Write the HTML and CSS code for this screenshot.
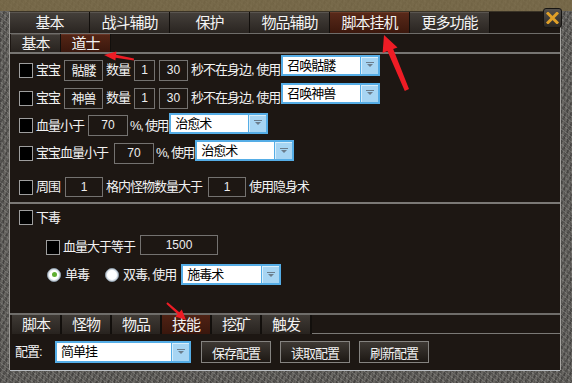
FILE: index.html
```html
<!DOCTYPE html>
<html lang="zh-CN">
<head>
  <meta charset="UTF-8">
  <title>脚本挂机</title>
  <link rel="stylesheet" href="styles.css">
</head>
<body>
  <div class="window">
    <div class="inner">
      <!-- main tabs -->
      <div class="main-tabs">
        <div class="tab">基本</div>
        <div class="tab">战斗辅助</div>
        <div class="tab">保护</div>
        <div class="tab">物品辅助</div>
        <div class="tab active">脚本挂机</div>
        <div class="tab">更多功能</div>
      </div>

      <!-- sub tabs -->
      <div class="sub-tabs">
        <div class="tab">基本</div>
        <div class="tab active">道士</div>
      </div>

      <!-- panel -->
      <div class="panel">
        <div class="row r1">
          <span class="check"></span>
          <span class="lbl">宝宝</span>
          <span class="box pet">骷髅</span>
          <span class="lbl l-num">数量</span>
          <span class="box n1">1</span>
          <span class="box n2">30</span>
          <span class="lbl l-away">秒不在身边, 使用</span>
          <div class="select s-pet"><span class="val">召唤骷髅</span><span class="drop"><svg width="8" height="6" viewBox="0 0 8 6"><rect x="0" y="0" width="8" height="1" fill="#6b7d8c"/><path d="M1 2h6l-3 3z" fill="#6b7d8c"/></svg></span></div>
        </div>

        <div class="row r2">
          <span class="check"></span>
          <span class="lbl">宝宝</span>
          <span class="box pet">神兽</span>
          <span class="lbl l-num">数量</span>
          <span class="box n1">1</span>
          <span class="box n2">30</span>
          <span class="lbl l-away">秒不在身边, 使用</span>
          <div class="select s-pet"><span class="val">召唤神兽</span><span class="drop"><svg width="8" height="6" viewBox="0 0 8 6"><rect x="0" y="0" width="8" height="1" fill="#6b7d8c"/><path d="M1 2h6l-3 3z" fill="#6b7d8c"/></svg></span></div>
        </div>

        <div class="row r3">
          <span class="check"></span>
          <span class="lbl">血量小于</span>
          <span class="box hp">70</span>
          <span class="lbl l-use">%, 使用</span>
          <div class="select s-heal"><span class="val">治愈术</span><span class="drop"><svg width="8" height="6" viewBox="0 0 8 6"><rect x="0" y="0" width="8" height="1" fill="#6b7d8c"/><path d="M1 2h6l-3 3z" fill="#6b7d8c"/></svg></span></div>
        </div>

        <div class="row r4">
          <span class="check"></span>
          <span class="lbl">宝宝血量小于</span>
          <span class="box hp pet-hp">70</span>
          <span class="lbl l-use">%, 使用</span>
          <div class="select s-heal"><span class="val">治愈术</span><span class="drop"><svg width="8" height="6" viewBox="0 0 8 6"><rect x="0" y="0" width="8" height="1" fill="#6b7d8c"/><path d="M1 2h6l-3 3z" fill="#6b7d8c"/></svg></span></div>
        </div>

        <div class="row r5">
          <span class="check"></span>
          <span class="lbl">周围</span>
          <span class="box grid">1</span>
          <span class="lbl l-grid">格内怪物数量大于</span>
          <span class="box count">1</span>
          <span class="lbl l-hide">使用隐身术</span>
        </div>

        <div class="divider"></div>

        <div class="row r6">
          <span class="check"></span>
          <span class="lbl">下毒</span>
        </div>

        <div class="row r7">
          <span class="check"></span>
          <span class="lbl">血量大于等于</span>
          <span class="box poison-hp">1500</span>
        </div>

        <div class="row r8">
          <span class="radio on"></span>
          <span class="lbl">单毒</span>
          <span class="radio r-double"></span>
          <span class="lbl">双毒, 使用</span>
          <div class="select s-poison"><span class="val">施毒术</span><span class="drop"><svg width="8" height="6" viewBox="0 0 8 6"><rect x="0" y="0" width="8" height="1" fill="#6b7d8c"/><path d="M1 2h6l-3 3z" fill="#6b7d8c"/></svg></span></div>
        </div>
      </div>

      <!-- bottom tabs -->
      <div class="bottom-tabs">
        <div class="tab">脚本</div>
        <div class="tab">怪物</div>
        <div class="tab">物品</div>
        <div class="tab active">技能</div>
        <div class="tab">挖矿</div>
        <div class="tab">触发</div>
        <div class="fill"></div>
      </div>

      <!-- config -->
      <div class="config">
        <span class="lbl">配置:</span>
        <div class="select s-config"><span class="val">简单挂</span><span class="drop"><svg width="8" height="6" viewBox="0 0 8 6"><rect x="0" y="0" width="8" height="1" fill="#6b7d8c"/><path d="M1 2h6l-3 3z" fill="#6b7d8c"/></svg></span></div>
        <button class="btn first">保存配置</button>
        <button class="btn">读取配置</button>
        <button class="btn">刷新配置</button>
      </div>
    </div>

    <button class="close">
      <svg width="13" height="12" viewBox="0 0 13 12">
        <path d="M2 1.5l9 9M11 1.5l-9 9" stroke="#e0a028" stroke-width="3" stroke-linecap="square"/>
      </svg>
    </button>

    <!-- red annotation arrows -->
    <svg class="marks" width="572" height="383" viewBox="0 0 572 383">
      <polygon fill="#ee1c25" points="104,55 116.4,51.5 116.1,54.8 134,58.6 133.8,60.4 115.7,57.8 115.4,60.5"/>
      <polygon fill="#ee1c25" points="384,35 397.5,47.4 393.2,49 409,89 404.8,91 387.4,51 382.6,53"/>
      <polygon fill="#ee1c25" points="186,320 175.3,316.6 177.6,314.3 166.3,303.7 167.6,302.3 179.3,312.3 181.8,309.6"/>
    </svg>
  </div>
</body>
</html>
```

FILE: styles.css
```css
/* Global */
body {
  margin: 0;
  padding: 0;
  background: #1d1713;
  font-family: "Liberation Sans", "Noto Sans CJK SC", sans-serif;
  font-size: 12px;
  color: #f2f2f2;
}

/* Stone frame */
.window {
  position: relative;
  width: 572px;
  height: 383px;
  box-sizing: border-box;
  padding: 12px 12px 13px 10px;
  background-color: #676561;
  background-image:
    linear-gradient(to bottom, rgba(122, 106, 70, 0.85) 0 11px, transparent 11px),
    repeating-linear-gradient(37deg, rgba(255, 255, 255, 0.12) 0 1px, transparent 1px 4px),
    repeating-linear-gradient(-61deg, rgba(0, 0, 0, 0.22) 0 2px, transparent 2px 5px),
    repeating-linear-gradient(90deg, rgba(0, 0, 0, 0.15) 0 1px, transparent 1px 3px);
  overflow: hidden;
}

.inner {
  width: 550px;
  height: 358px;
  background: #1d1713;
  display: flex;
  flex-direction: column;
  box-shadow: -1px 0 0 #9c9a96, 1px 0 0 #a8a6a2, 0 -1px 0 #3a3326, 0 1px 0 #b8bcc0;
}

/* Tabs */
.main-tabs {
  display: flex;
  height: 21px;
  border-bottom: 1px solid #6f6d6a;
  background: #1d1713;
}

.main-tabs .tab {
  width: 79px;
  border-right: 1px solid #120f0c;
  background: linear-gradient(to bottom, #45403b, #2a2521);
  box-shadow: inset 0 1px 0 #5a5550;
  text-align: center;
  font-size: 15px;
  letter-spacing: -1px;
  line-height: 21px;
  color: #f4f4f4;
}

.main-tabs .tab.active {
  background: linear-gradient(to bottom, #5a2a1a, #3c180d);
  box-shadow: inset 0 1px 0 #6a3a28;
}

.sub-tabs {
  display: flex;
  height: 18px;
  padding-left: 1px;
  border-bottom: 2px solid #777572;
}

.sub-tabs .tab {
  width: 49px;
  border-right: 1px solid #120f0c;
  background: linear-gradient(to bottom, #3f3a35, #28231f);
  box-shadow: inset 0 1px 0 #55504b;
  text-align: center;
  font-size: 15px;
  letter-spacing: -1px;
  line-height: 19px;
}

.sub-tabs .tab.active {
  background: linear-gradient(to bottom, #552616, #3a170d);
  box-shadow: inset 0 1px 0 #683526;
}

/* Panel */
.panel {
  flex: 1;
  padding: 2px 0 0 9px;
}

.row {
  display: flex;
  align-items: center;
  height: 28px;
  white-space: nowrap;
}

.r3, .r6, .r8 { height: 27px; }
.r5 { margin-top: 6px; }
.r7 { margin-top: 2px; }

.divider {
  height: 2px;
  margin: 1px 0 0 -9px;
  background: #7b7976;
}

.check {
  width: 12px;
  height: 13px;
  background: #000;
  border: 1px solid #9e9e9e;
  margin-right: 3px;
  flex: none;
}

.r7 .check { margin-left: 27px; }

.lbl {
  font-size: 13px;
  letter-spacing: -1px;
  line-height: 14px;
}

.radio {
  width: 12px;
  height: 12px;
  border-radius: 50%;
  background: #fff;
  border: 1px solid #8a9aa8;
  box-shadow: inset 0 0 0 1px #d6dee6;
  margin: 0 4px 0 28px;
  flex: none;
  display: flex;
  align-items: center;
  justify-content: center;
}

.radio.on::after {
  content: "";
  width: 5px;
  height: 5px;
  border-radius: 50%;
  background: #5fae32;
}

.radio.r-double { margin-left: 16px; }

.box {
  height: 18px;
  border: 1px solid #747270;
  box-sizing: border-box;
  text-align: center;
  line-height: 16px;
  color: #eeeeee;
  flex: none;
}

.box.pet { width: 39px; height: 21px; line-height: 19px; margin: 0 3px 0 4px; font-size: 13px; letter-spacing: -1px; }
.box.n1 { width: 21px; height: 21px; line-height: 19px; margin-left: 4px; }
.box.n2 { width: 29px; height: 21px; line-height: 19px; margin: 0 3px 0 4px; }
.box.hp { width: 40px; height: 21px; line-height: 19px; margin: 0 2px 0 4px; }
.box.pet-hp { margin-left: 6px; }
.box.grid { width: 38px; height: 20px; line-height: 18px; margin: 0 3px 0 5px; }
.box.count { width: 38px; height: 20px; line-height: 18px; margin: 0 3px 0 6px; }
.box.poison-hp { width: 78px; height: 20px; line-height: 18px; margin: -4px 0 0 5px; }

.l-away { margin-right: 1px; }
.l-use { margin-right: 1px; letter-spacing: -1.3px; }

/* Dropdowns */
.select {
  display: flex;
  height: 21px;
  box-sizing: border-box;
  border: 2px solid #55ade6;
  background: #fff;
  color: #000;
  flex: none;
}

.select .val {
  flex: 1;
  padding-left: 4px;
  line-height: 17px;
  font-size: 13px;
  letter-spacing: -1px;
}

.select .drop {
  width: 17px;
  background: #a7d5f3;
  border-left: 1px solid #55ade6;
  box-shadow: inset 1px 1px 0 #d8eefb;
  display: flex;
  align-items: center;
  justify-content: center;
}

.s-pet { width: 99px; margin-bottom: 10px; }
.s-heal { width: 99px; margin-bottom: 5px; }
.s-poison { width: 100px; margin-left: 5px; }
.s-config { width: 136px; height: 22px; margin-left: 7px; }

/* Bottom tabs */
.bottom-tabs {
  display: flex;
  height: 19px;
  border-top: 2px solid #6f6d6a;
  padding-left: 2px;
}

.bottom-tabs .tab {
  width: 48px;
  border-right: 2px solid #120f0c;
  background: linear-gradient(to bottom, #3f3a35, #28231f);
  text-align: center;
  font-size: 15px;
  letter-spacing: -1px;
  line-height: 19px;
}

.bottom-tabs .tab.active {
  background: linear-gradient(to bottom, #4f2214, #3a170d);
}

.bottom-tabs .fill {
  flex: 1;
  border-bottom: 1px solid #7b7976;
}

/* Config row */
.config {
  display: flex;
  align-items: center;
  height: 36px;
  padding-left: 5px;
}

.config .lbl {
  width: 33px;
}

.btn {
  width: 70px;
  height: 22px;
  margin-left: 9px;
  border: 1px solid #858380;
  background: linear-gradient(to bottom, #3e3934, #1d1814);
  color: #f2f2f2;
  font-family: "Liberation Sans", "Noto Sans CJK SC", sans-serif;
  font-size: 13px;
  letter-spacing: -1px;
  padding: 0;
}

.btn.first { margin-left: 10px; }

/* Close button */
.close {
  position: absolute;
  left: 543px;
  top: 8px;
  width: 19px;
  height: 20px;
  padding: 0;
  border: 1px solid #161412;
  border-radius: 3px;
  background: linear-gradient(to bottom, #55514c, #2a2724);
  display: flex;
  align-items: center;
  justify-content: center;
}

/* Annotation arrows */
.marks {
  position: absolute;
  left: 0;
  top: 0;
  pointer-events: none;
}
```
